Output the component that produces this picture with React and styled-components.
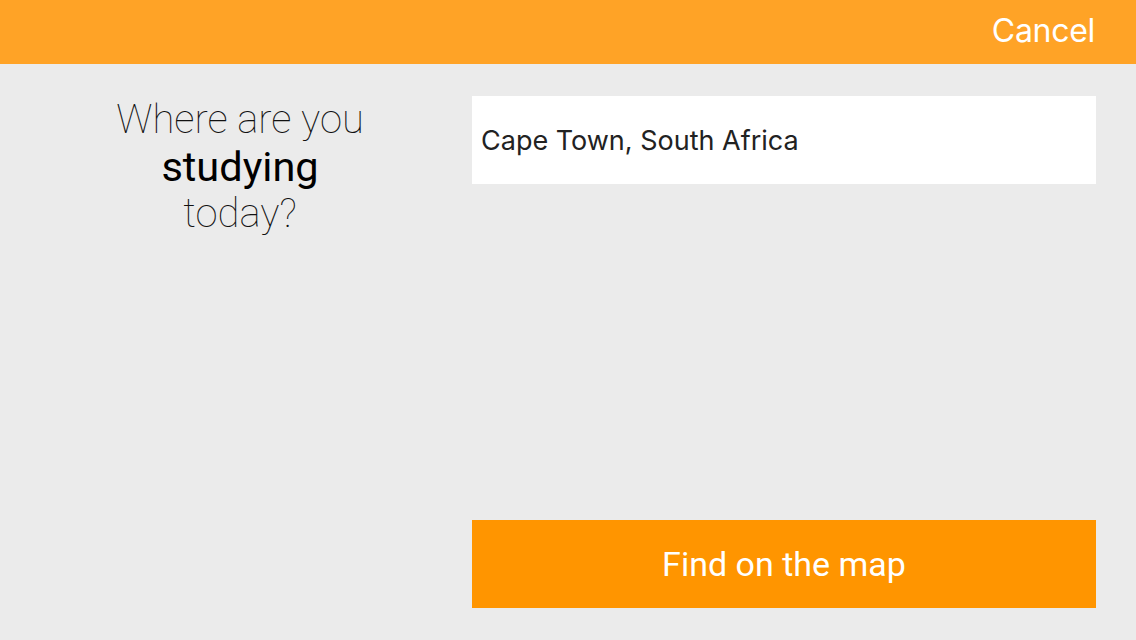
import React from "react";
import styled, { createGlobalStyle } from "styled-components";

const Global = createGlobalStyle`
  html, body { margin: 0; padding: 0; }
  body { background: #ebebeb; font-family: Roboto, "Noto Sans", sans-serif; }
`;

const Page = styled.div`
  width: 1136px;
  height: 640px;
  display: flex;
  flex-direction: column;
  background: #ebebeb;
`;

const TopBar = styled.header`
  height: 64px;
  flex: none;
  background: #ffa326;
  display: flex;
  align-items: center;
  justify-content: flex-end;
  padding: 0 41px;
  box-sizing: border-box;
`;

const CancelButton = styled.button`
  border: 0;
  background: none;
  padding: 0;
  color: #ffffff;
  font-family: Inter, "Liberation Sans", sans-serif;
  font-size: 32px;
  font-weight: 400;
  letter-spacing: -0.3px;
  margin-top: -4px;
  cursor: pointer;
`;

const Main = styled.main`
  flex: 1;
  display: grid;
  grid-template-columns: 400px 1fr;
  column-gap: 32px;
  padding: 32px 40px;
  box-sizing: border-box;
`;

const Question = styled.h1`
  margin: 0;
  text-align: center;
  font-family: Roboto, sans-serif;
  font-weight: 100;
  font-size: 40px;
  line-height: 47px;
  color: #111;
`;

const Strong = styled.span`
  display: block;
  font-weight: 400;
  font-size: 41.5px;
  color: #000;
`;

const Right = styled.div`
  display: flex;
  flex-direction: column;
  justify-content: space-between;
`;

const LocationField = styled.div`
  height: 88px;
  background: #ffffff;
  display: flex;
  align-items: center;
  padding: 0 9px;
  font-family: Inter, "Liberation Sans", sans-serif;
  font-size: 27px;
  color: #222;
  letter-spacing: 0;
`;

const FindButton = styled.button`
  height: 88px;
  border: 0;
  background: #ff9500;
  color: #ffffff;
  font-family: Roboto, sans-serif;
  font-size: 34px;
  font-weight: 400;
  cursor: pointer;
`;

export default function App() {
  return (
    <>
      <Global />
      <Page>
        <TopBar>
          <CancelButton>Cancel</CancelButton>
        </TopBar>
        <Main>
          <Question>
            Where are you
            <Strong>studying</Strong>
            today?
          </Question>
          <Right>
            <LocationField>Cape Town, South Africa</LocationField>
            <FindButton>Find on the map</FindButton>
          </Right>
        </Main>
      </Page>
    </>
  );
}
